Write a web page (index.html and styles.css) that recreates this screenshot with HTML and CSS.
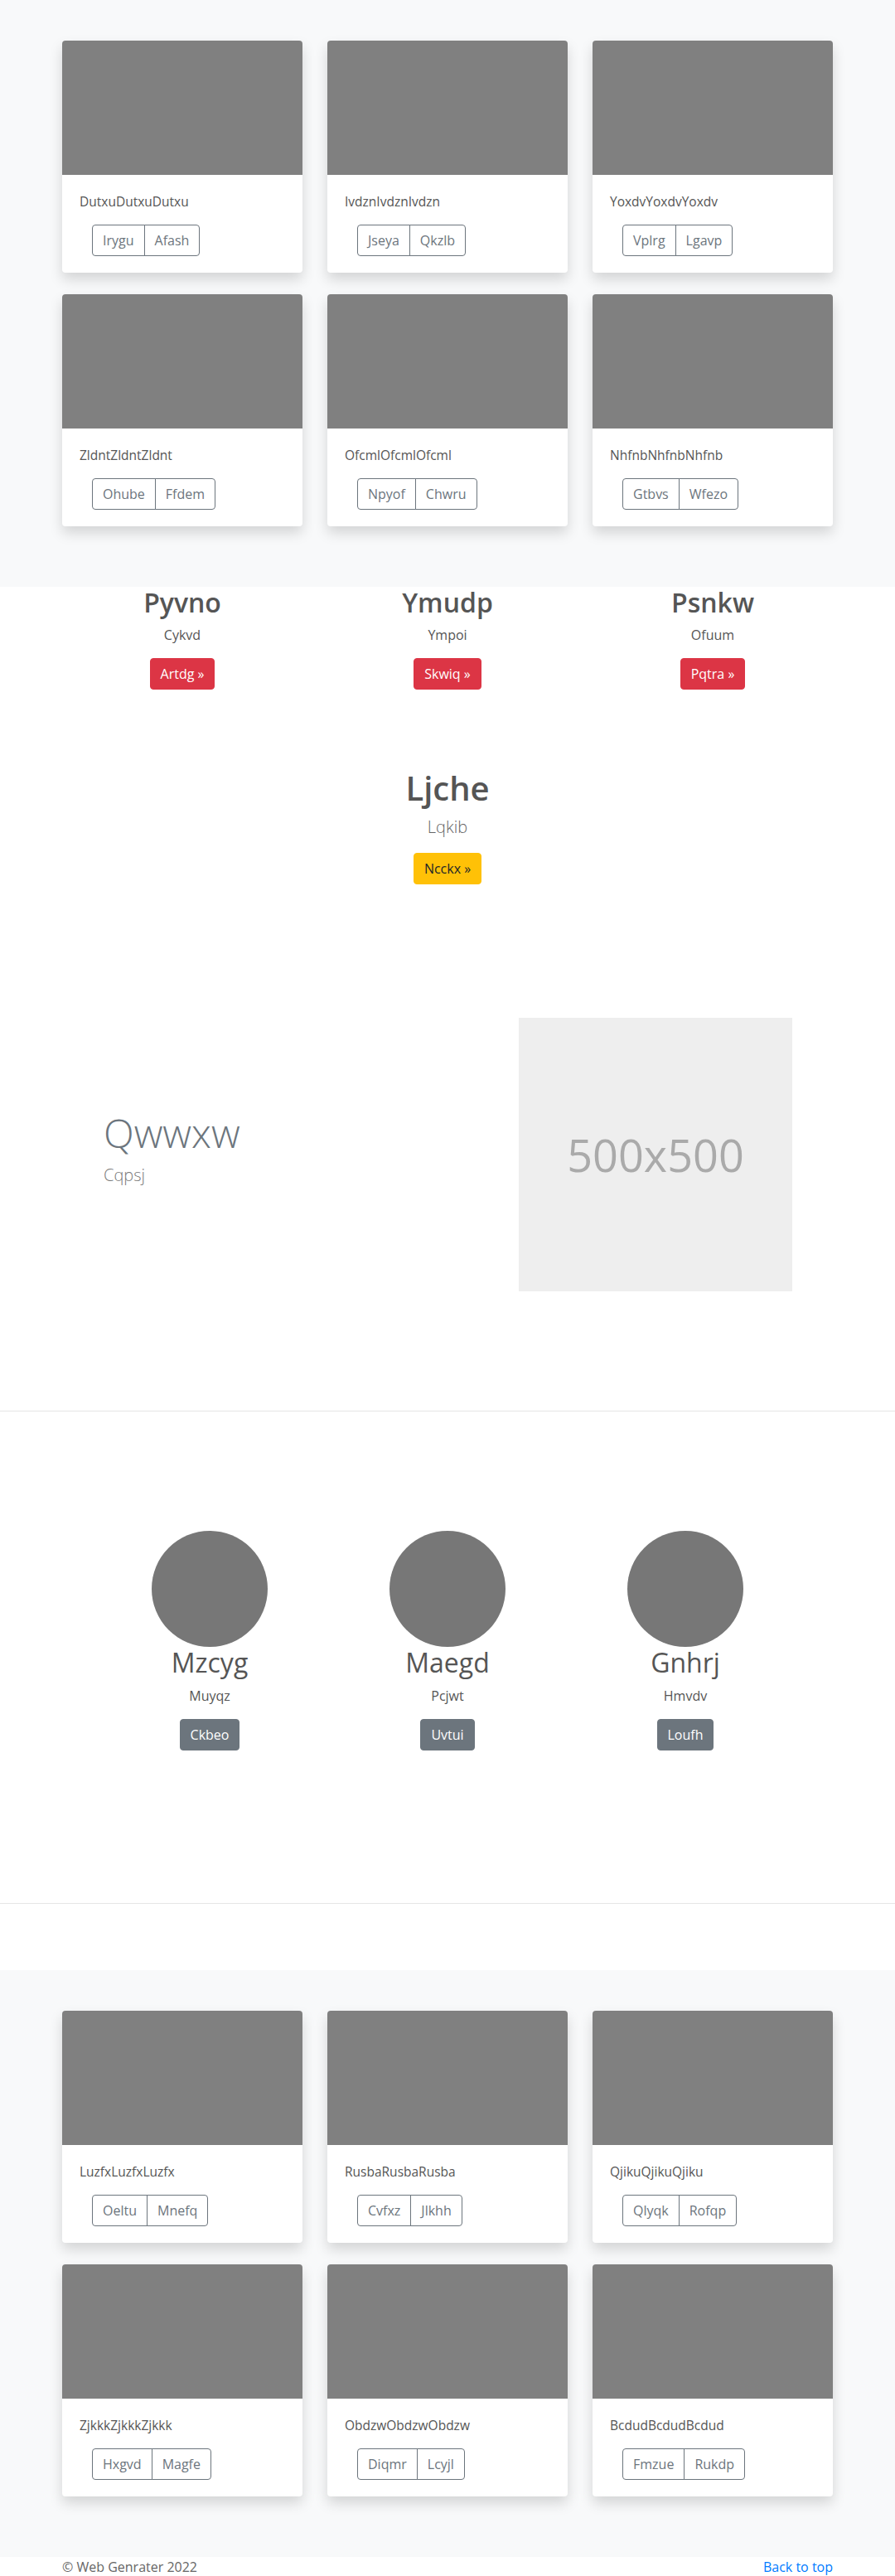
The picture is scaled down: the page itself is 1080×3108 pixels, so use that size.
FILE: index.html
```html
<!DOCTYPE html>
<html lang="en">
<head>
<meta charset="utf-8">
<title>Web Genrater</title>
<link rel="stylesheet" href="styles.css">
</head>
<body>
<main>
  <section class="album">
    <div class="container">
      <div class="card-grid">
        <div class="card"><div class="card-img"></div><div class="card-body"><p class="card-text">DutxuDutxuDutxu</p><div class="btn-group"><span class="btn-o">Irygu</span><span class="btn-o">Afash</span></div></div></div>
        <div class="card"><div class="card-img"></div><div class="card-body"><p class="card-text">IvdznIvdznIvdzn</p><div class="btn-group"><span class="btn-o">Jseya</span><span class="btn-o">Qkzlb</span></div></div></div>
        <div class="card"><div class="card-img"></div><div class="card-body"><p class="card-text">YoxdvYoxdvYoxdv</p><div class="btn-group"><span class="btn-o">Vplrg</span><span class="btn-o">Lgavp</span></div></div></div>
        <div class="card"><div class="card-img"></div><div class="card-body"><p class="card-text">ZldntZldntZldnt</p><div class="btn-group"><span class="btn-o">Ohube</span><span class="btn-o">Ffdem</span></div></div></div>
        <div class="card"><div class="card-img"></div><div class="card-body"><p class="card-text">OfcmlOfcmlOfcml</p><div class="btn-group"><span class="btn-o">Npyof</span><span class="btn-o">Chwru</span></div></div></div>
        <div class="card"><div class="card-img"></div><div class="card-body"><p class="card-text">NhfnbNhfnbNhfnb</p><div class="btn-group"><span class="btn-o">Gtbvs</span><span class="btn-o">Wfezo</span></div></div></div>
      </div>
    </div>
  </section>

  <section class="features container">
    <div class="feature">
      <h2 class="feature-title">Pyvno</h2>
      <p class="feature-text">Cykvd</p>
      <a class="btn btn-red">Artdg &raquo;</a>
    </div>
    <div class="feature">
      <h2 class="feature-title">Ymudp</h2>
      <p class="feature-text">Ympoi</p>
      <a class="btn btn-red">Skwiq &raquo;</a>
    </div>
    <div class="feature">
      <h2 class="feature-title">Psnkw</h2>
      <p class="feature-text">Ofuum</p>
      <a class="btn btn-red">Pqtra &raquo;</a>
    </div>
  </section>

  <section class="hero">
    <h1 class="hero-title">Ljche</h1>
    <p class="hero-lead">Lqkib</p>
    <a class="btn btn-yellow">Ncckx &raquo;</a>
  </section>

  <section class="split container">
    <div class="split-text">
      <h1 class="split-title">Qwwxw</h1>
      <p class="split-lead">Cqpsj</p>
    </div>
    <div class="placeholder">500x500</div>
  </section>

  <hr class="divider">

  <section class="marketing">
    <div class="person">
      <div class="avatar"></div>
      <h2 class="person-name">Mzcyg</h2>
      <p class="person-text">Muyqz</p>
      <a class="btn btn-gray">Ckbeo</a>
    </div>
    <div class="person">
      <div class="avatar"></div>
      <h2 class="person-name">Maegd</h2>
      <p class="person-text">Pcjwt</p>
      <a class="btn btn-gray">Uvtui</a>
    </div>
    <div class="person">
      <div class="avatar"></div>
      <h2 class="person-name">Gnhrj</h2>
      <p class="person-text">Hmvdv</p>
      <a class="btn btn-gray">Loufh</a>
    </div>
  </section>

  <hr class="divider divider-last">

  <section class="album">
    <div class="container">
      <div class="card-grid">
        <div class="card"><div class="card-img"></div><div class="card-body"><p class="card-text">LuzfxLuzfxLuzfx</p><div class="btn-group"><span class="btn-o">Oeltu</span><span class="btn-o">Mnefq</span></div></div></div>
        <div class="card"><div class="card-img"></div><div class="card-body"><p class="card-text">RusbaRusbaRusba</p><div class="btn-group"><span class="btn-o">Cvfxz</span><span class="btn-o">Jlkhh</span></div></div></div>
        <div class="card"><div class="card-img"></div><div class="card-body"><p class="card-text">QjikuQjikuQjiku</p><div class="btn-group"><span class="btn-o">Qlyqk</span><span class="btn-o">Rofqp</span></div></div></div>
        <div class="card"><div class="card-img"></div><div class="card-body"><p class="card-text">ZjkkkZjkkkZjkkk</p><div class="btn-group"><span class="btn-o">Hxgvd</span><span class="btn-o">Magfe</span></div></div></div>
        <div class="card"><div class="card-img"></div><div class="card-body"><p class="card-text">ObdzwObdzwObdzw</p><div class="btn-group"><span class="btn-o">Diqmr</span><span class="btn-o">Lcyjl</span></div></div></div>
        <div class="card"><div class="card-img"></div><div class="card-body"><p class="card-text">BcdudBcdudBcdud</p><div class="btn-group"><span class="btn-o">Fmzue</span><span class="btn-o">Rukdp</span></div></div></div>
      </div>
    </div>
  </section>
</main>

<footer class="footer">
  <div class="container footer-inner">
    <p class="copy">&copy; Web Genrater 2022</p>
    <a class="top-link" href="#">Back to top</a>
  </div>
</footer>
</body>
</html>
```

FILE: styles.css
```css
* { box-sizing: border-box; }

html, body {
  margin: 0;
  padding: 0;
}

body {
  font-family: "Open Sans", "Noto Sans", "Liberation Sans", sans-serif;
  font-size: 16px;
  line-height: 1.5;
  color: #555;
  background: #fff;
}

p, h1, h2 { margin: 0; }

.container {
  width: 960px;
  margin: 0 auto;
  padding: 0 15px;
}

/* Album sections */
.album {
  background: #f8f9fa;
  padding: 49px 0 47px;
}

.card-grid {
  display: grid;
  grid-template-columns: repeat(3, 290px);
  column-gap: 30px;
  row-gap: 26px;
  padding-bottom: 26px;
}

.card {
  height: 280px;
  background: #fff;
  border-radius: 4px;
  overflow: hidden;
  box-shadow: 0 8px 16px rgba(0, 0, 0, 0.15);
}

.card-img {
  height: 162px;
  background: #808080;
}

.card-body {
  padding: 20px 21px;
}

.card-text {
  margin-bottom: 16px;
  color: #555;
  font-size: 15.5px;
  line-height: 24px;
}

.btn-group {
  display: inline-flex;
  margin-left: 15px;
}

.btn-o {
  display: inline-block;
  padding: 6px 12px;
  line-height: 24px;
  border: 1px solid #6c757d;
  color: #6c757d;
}

.btn-o:first-child {
  border-radius: 4px 0 0 4px;
}

.btn-o + .btn-o {
  margin-left: -1px;
  border-radius: 0 4px 4px 0;
}

/* Generic buttons */
.btn {
  display: inline-block;
  padding: 6px 12px;
  line-height: 24px;
  border: 1px solid transparent;
  border-radius: 4px;
  text-decoration: none;
}

.btn-red { background: #dc3545; border-color: #dc3545; color: #fff; }
.btn-yellow { background: #ffc107; border-color: #ffc107; color: #212529; }
.btn-gray { background: #6c757d; border-color: #6c757d; color: #fff; }

/* Features */
.features {
  display: grid;
  grid-template-columns: repeat(3, 1fr);
  column-gap: 30px;
  text-align: center;
}

.feature-title {
  font-size: 32px;
  font-weight: 600;
  line-height: 1.2;
  margin-bottom: 8px;
  color: #555;
}

.feature-text {
  margin-bottom: 16px;
}

/* Hero */
.hero {
  margin-top: 95px;
  text-align: center;
}

.hero-title {
  font-size: 40px;
  font-weight: 600;
  line-height: 1.2;
  margin-bottom: 8px;
  color: #555;
}

.hero-lead {
  font-size: 20px;
  font-weight: 300;
  line-height: 1.5;
  margin-bottom: 16px;
  color: #666;
}

/* Split */
.split {
  margin-top: 161px;
  display: flex;
  align-items: center;
  justify-content: space-between;
}

.split-text {
  padding-left: 50px;
}

.split-title {
  font-size: 48px;
  font-weight: 300;
  line-height: 1.2;
  margin-bottom: 8px;
  color: #6c757d;
}

.split-lead {
  font-size: 20px;
  font-weight: 300;
  line-height: 1.5;
  margin-bottom: 16px;
  color: #7a7a7a;
}

.placeholder {
  width: 330px;
  height: 330px;
  margin-right: 49px;
  background: #eee;
  color: #aaa;
  font-size: 54px;
  display: flex;
  align-items: center;
  justify-content: center;
}

/* Divider */
.divider {
  margin: 144px 0 0;
  border: 0;
  border-top: 1px solid rgba(0, 0, 0, 0.1);
  height: 0;
}

.divider-last {
  margin-top: 184px;
  margin-bottom: 80px;
}

/* Marketing */
.marketing {
  width: 861px;
  margin: 144px auto 0;
  display: grid;
  grid-template-columns: repeat(3, 1fr);
  text-align: center;
}

.avatar {
  width: 140px;
  height: 140px;
  border-radius: 50%;
  background: #777;
  margin: 0 auto;
}

.person-name {
  font-size: 32px;
  font-weight: 400;
  line-height: 1.2;
  margin-bottom: 8px;
  color: #555;
}

.person-text {
  margin-bottom: 16px;
}

/* Footer */
.footer {
  color: #666;
}

.footer-inner {
  display: flex;
  justify-content: space-between;
}

.top-link {
  color: #007bff;
  text-decoration: none;
}
```
